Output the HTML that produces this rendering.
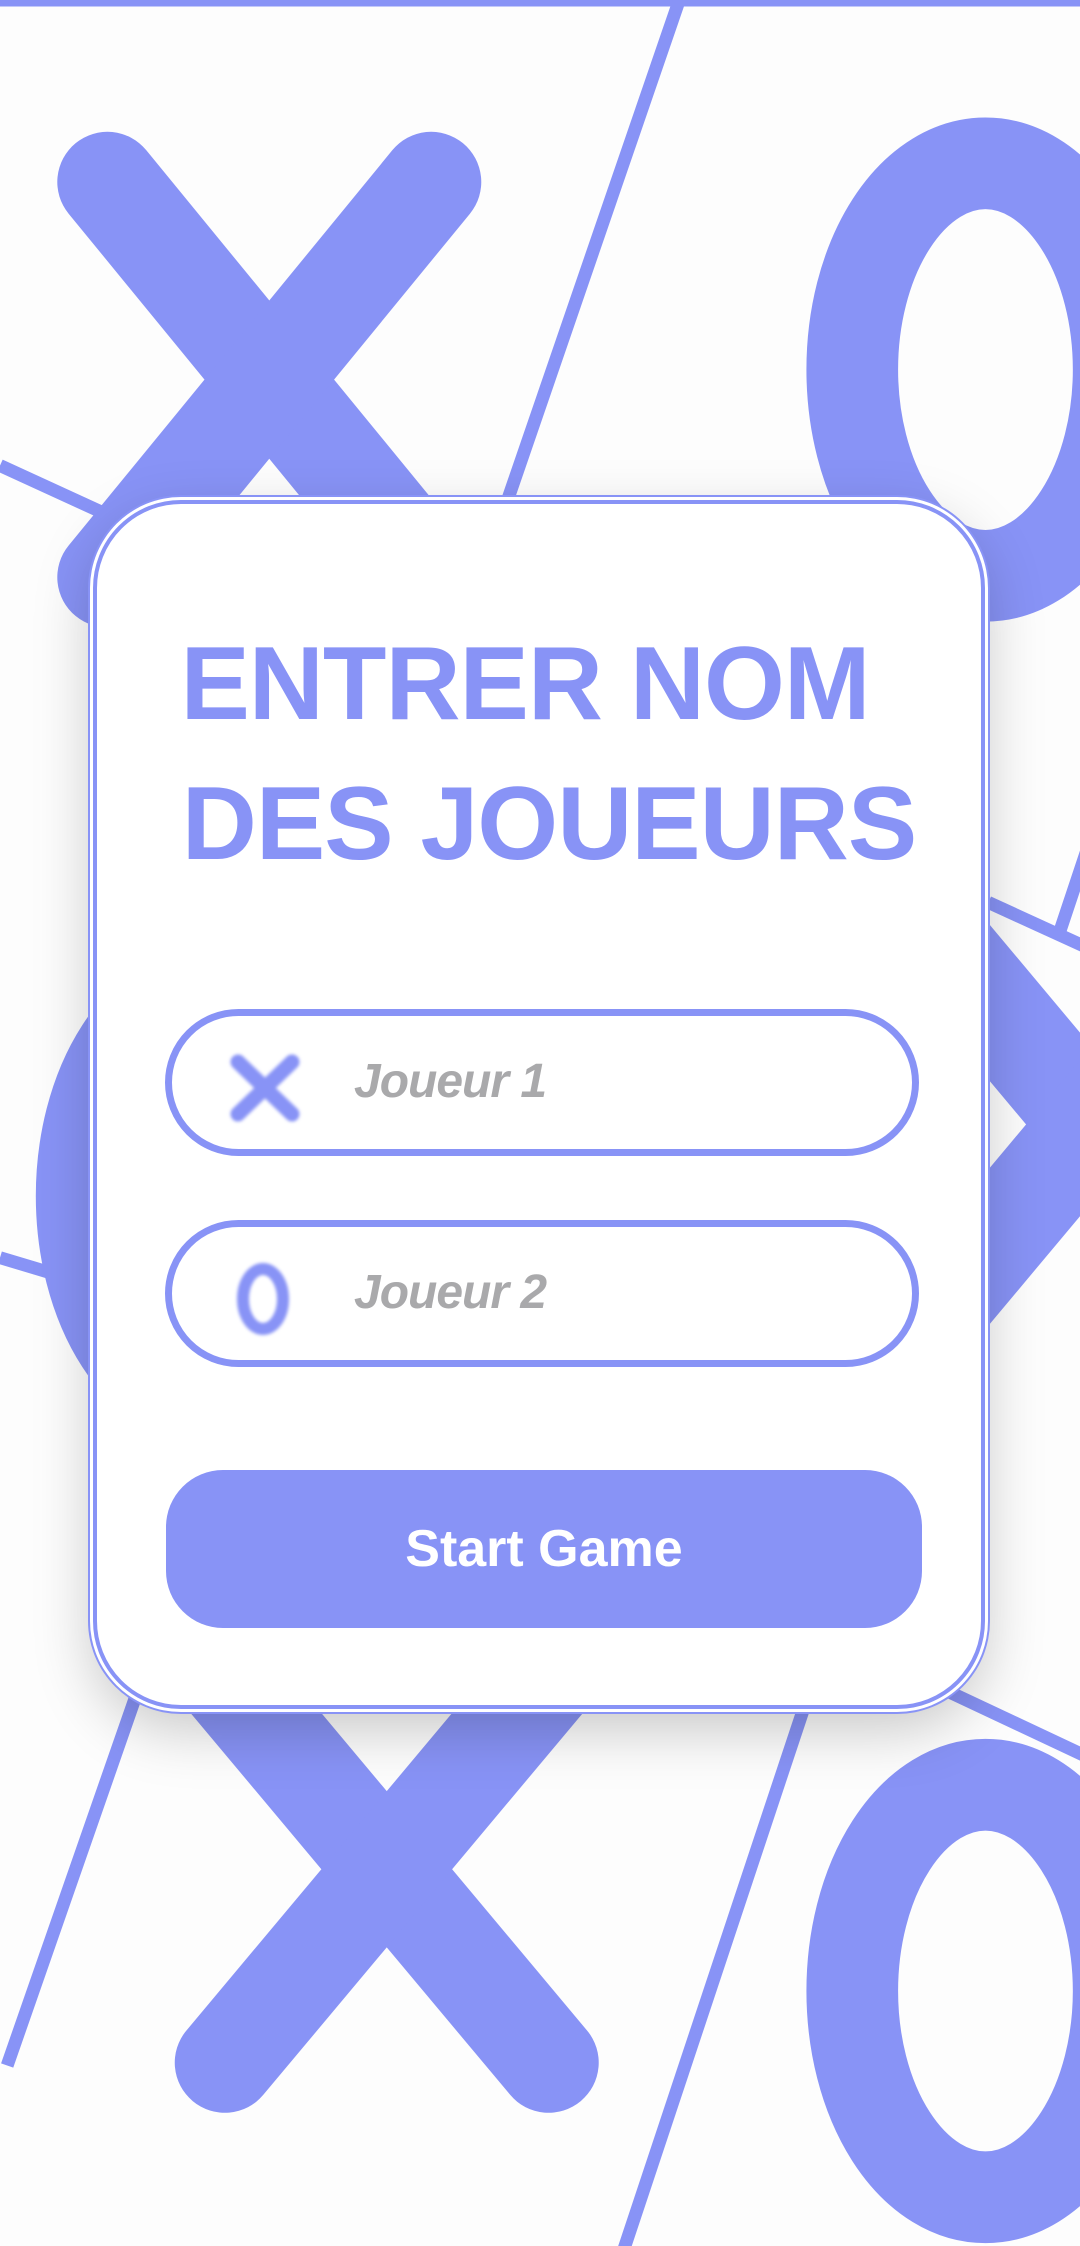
<!DOCTYPE html>
<html><head><meta charset="utf-8"><style>
html,body{margin:0;padding:0;width:1080px;height:2246px;overflow:hidden;background:#fdfdfd;font-family:"Liberation Sans",sans-serif;}
#bg{position:absolute;left:0;top:0;}
.card{position:absolute;left:93px;top:500px;width:884px;height:1201px;background:#fff;border:4px solid #8893f6;border-radius:88px;box-shadow:0 0 0 3px #fff,0 0 0 5px #8893f6,0 20px 60px rgba(0,0,0,0.22);}
.title{position:absolute;width:100%;text-align:center;color:#8893f6;font-weight:bold;font-size:104px;letter-spacing:-1px;line-height:140px;}
.inp{position:absolute;left:68px;width:740px;height:133px;border:7px solid #8893f6;border-radius:80px;}
.ph{position:absolute;left:182px;top:38px;font-style:italic;font-weight:bold;font-size:48px;color:#a9a9ab;letter-spacing:-1px;}
.btn{position:absolute;left:69px;top:966px;width:756px;height:158px;background:#8893f6;border-radius:57px;color:#fff;font-weight:bold;font-size:52px;text-align:center;line-height:158px;}
</style></head><body>
<svg id="bg" width="1080" height="2246" viewBox="0 0 754 1568">
<g stroke="#8893f6" fill="none">
<line x1="0" y1="2" x2="754" y2="2" stroke-width="5"/>
<line x1="476" y1="-5" x2="330" y2="420" stroke-width="9"/>
<line x1="0" y1="325" x2="120" y2="380" stroke-width="9"/>
<line x1="690" y1="630" x2="760" y2="662" stroke-width="9"/>
<line x1="0" y1="878" x2="90" y2="905" stroke-width="9"/>
<line x1="660" y1="1180" x2="760" y2="1227" stroke-width="9"/>
<line x1="98" y1="1175" x2="5" y2="1442" stroke-width="9"/>
<line x1="562" y1="1190" x2="434" y2="1575" stroke-width="9"/>
<line x1="770" y1="560" x2="740" y2="650" stroke-width="9"/>
<g stroke-width="70" stroke-linecap="round">
<line x1="75" y1="127" x2="301" y2="403"/><line x1="301" y1="127" x2="75" y2="403"/>
<line x1="157" y1="1170" x2="383" y2="1440"/><line x1="383" y1="1170" x2="157" y2="1440"/>
<line x1="649" y1="650" x2="875" y2="920"/><line x1="875" y1="650" x2="649" y2="920"/>
</g>
<g stroke-width="64">
<ellipse cx="688" cy="258" rx="93" ry="144"/>
<ellipse cx="688" cy="1390" rx="93" ry="144"/>
<ellipse cx="150" cy="835" rx="93" ry="144"/>
</g>
</g>
</svg>
<div class="card">
<div class="title" style="top:110px;left:-14px;">ENTRER NOM</div>
<div class="title" style="top:250px;left:10px;">DES JOUEURS</div>
<div class="inp" style="top:505px;">
<svg style="position:absolute;left:56px;top:36px;filter:blur(1.5px)" width="74" height="72"><g stroke="#8893f6" stroke-width="15" stroke-linecap="round"><line x1="10" y1="10" x2="64" y2="62"/><line x1="64" y1="10" x2="10" y2="62"/></g></svg>
<div class="ph">Joueur 1</div></div>
<div class="inp" style="top:716px;">
<svg style="position:absolute;left:60px;top:32px;filter:blur(1.5px)" width="62" height="80"><ellipse cx="31" cy="40" rx="20" ry="30" stroke="#8893f6" stroke-width="12" fill="none"/></svg>
<div class="ph">Joueur 2</div></div>
<div class="btn">Start Game</div>
</div>
</body></html>
